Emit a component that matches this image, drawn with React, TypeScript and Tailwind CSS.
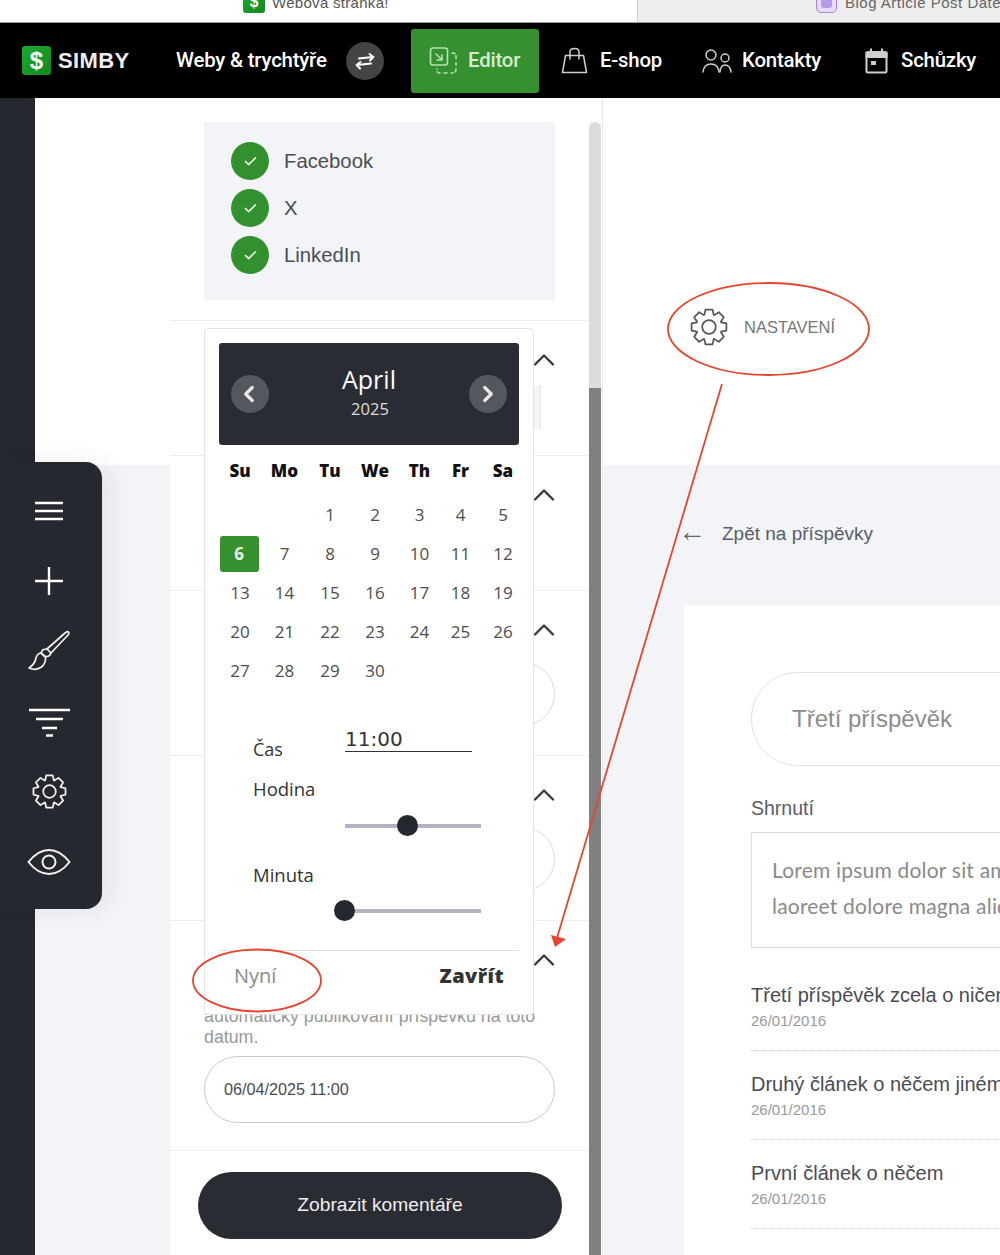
import React from "react";
import { Check, ChevronUp, ChevronLeft, ChevronRight } from "lucide-react";

function Gear({ size, stroke, sw = 1.6 }: { size: number; stroke: string; sw?: number }) {
  const pts: string[] = [];
  const teeth = 8;
  for (let i = 0; i < teeth; i++) {
    const a = (i * 2 * Math.PI) / teeth - Math.PI / 2;
    const w = 0.2;
    const list: [number, number][] = [
      [a - 0.37, 8.2],
      [a - w, 11.2],
      [a + w, 11.2],
      [a + 0.37, 8.2],
    ];
    list.forEach(([t, r]) => pts.push(`${(12 + r * Math.cos(t)).toFixed(2)},${(12 + r * Math.sin(t)).toFixed(2)}`));
  }
  return (
    <svg width={size} height={size} viewBox="0 0 24 24" fill="none" stroke={stroke} strokeWidth={sw} strokeLinejoin="round">
      <polygon points={pts.join(" ")} />
      <circle cx="12" cy="12" r="4.3" />
    </svg>
  );
}

function SLogo({ size, className }: { size: number; className?: string }) {
  return (
    <span
      style={{ width: size, height: size }}
      className={"flex shrink-0 items-center justify-center rounded-[3px] bg-gradient-to-br from-[#1fa830] to-[#0f8a22] font-['Liberation_Sans'] font-bold leading-none text-white " + (className ?? "")}
    >
      $
    </span>
  );
}

function NavText({ children, className }: { children: React.ReactNode; className?: string }) {
  return <span className={"whitespace-nowrap font-['Roboto'] text-[20.4px] font-medium tracking-[-0.2px] " + (className ?? "text-white")}>{children}</span>;
}

function Section({ height, children }: { height: string; children?: React.ReactNode }) {
  return (
    <div className={"flex flex-col border-b border-[#efefef] " + height}>
      <div className="flex h-[79px] shrink-0 justify-end pr-[27px] pt-[21px]">
        <ChevronUp size={36} strokeWidth={1.6} className="text-[#3a3c44]" />
      </div>
      {children}
    </div>
  );
}

const days: (number | null)[] = [null, null, 1, 2, 3, 4, 5, 6, 7, 8, 9, 10, 11, 12, 13, 14, 15, 16, 17, 18, 19, 20, 21, 22, 23, 24, 25, 26, 27, 28, 29, 30];

function Slider({ value }: { value: string }) {
  return (
    <div className="relative ml-[126px] h-[21px] w-[136px]">
      <div className="absolute left-0 right-0 top-[8.5px] h-[4px] bg-[#b4b3c4]" />
      <div className={"absolute top-0 h-[21px] w-[21px] rounded-full bg-[#262830] " + value} />
    </div>
  );
}

export default function App() {
  return (
    <div className="relative flex h-[1255px] w-[1000px] flex-col overflow-hidden bg-white font-['Liberation_Sans',sans-serif]">
      {/* browser tabs */}
      <div className="flex h-[22px] shrink-0 overflow-hidden">
        <div className="flex w-[637px] shrink-0 items-start pl-[243px]">
          <SLogo size={22} className="-mt-[9px] text-[16px]" />
          <span className="-mt-[8px] ml-[7px] text-[15px] tracking-[0.3px] text-[#555]">Webová stránka!</span>
        </div>
        <div className="flex flex-1 items-start border-l border-[#ccc] bg-[#eeeeee] pl-[178px]">
          <span className="-mt-[9px] h-[22px] w-[21px] shrink-0 rounded-[5px] border border-[#a884e0] bg-[#e8dcf8] p-[4px]">
            <span className="block h-full w-full rounded-[3px] bg-[#b79be8]" />
          </span>
          <span className="-mt-[8px] ml-[8px] whitespace-nowrap text-[15px] tracking-[0.5px] text-[#666]">Blog Article Post Date</span>
        </div>
      </div>

      {/* nav */}
      <div className="flex h-[76px] shrink-0 items-center border-t border-[#999] bg-black">
        <SLogo size={29} className="ml-[22px] text-[24px]" />
        <span className="ml-[7px] w-[71px] font-['Liberation_Sans'] text-[22px] font-bold tracking-[0.4px] text-[#eee]">SIMBY</span>
        <span className="ml-[47px] w-[150px]"><NavText>Weby &amp; trychtýře</NavText></span>
        <span className="ml-[20px] flex h-[38px] w-[38px] shrink-0 items-center justify-center rounded-full bg-[#444446]">
          <svg width="24" height="18" viewBox="0 0 24 18" fill="none" stroke="#fff" strokeWidth="2" strokeLinecap="round" strokeLinejoin="round">
            <path d="M6 6.5 L20 5 M16.5 2 L20.5 5 L17 8.5" />
            <path d="M18 11.5 L4 13 M7.5 10 L3.5 13 L7 16.5" />
          </svg>
        </span>
        <div className="ml-[27px] flex h-[64px] w-[128px] shrink-0 items-center rounded-[3px] bg-[#36902f] pl-[18px]">
          <svg width="30" height="30" viewBox="0 0 30 30" fill="none" stroke="#b9e0b4" strokeWidth="1.6" strokeLinecap="round">
            <rect x="1.5" y="2" width="17" height="17" rx="2.5" />
            <path d="M7 8 L13 14 M13 9 V14 H8" />
            <path d="M23 7 H24 Q27 7 27 10 V13 M27 17 V19 M27 23 Q27 27 24 27 H22 M18 27 H15 M11 27 Q8 27 8 24 V23" strokeDasharray="3 2.5" />
          </svg>
          <span className="ml-[9px]"><NavText className="text-[#d5ecd2]">Editor</NavText></span>
        </div>
        <svg className="ml-[22px] shrink-0" width="27" height="27" viewBox="0 0 27 27" fill="none" stroke="#cfcfcf" strokeWidth="1.5" strokeLinejoin="round">
          <path d="M4.5 8.5 H22.5 L25.5 25.5 H1.5 Z" />
          <path d="M9 12.5 V5 Q9 1.5 13.5 1.5 Q18 1.5 18 5 V12.5" />
        </svg>
        <span className="ml-[12px] w-[62px]"><NavText>E-shop</NavText></span>
        <svg className="ml-[40px] shrink-0" width="30" height="26" viewBox="0 0 30 26" fill="none" stroke="#cfcfcf" strokeWidth="1.5" strokeLinecap="round">
          <circle cx="9" cy="7" r="5" />
          <circle cx="23" cy="10" r="4" />
          <path d="M1 24 Q2 16 9 16 Q16 16 17 24" />
          <path d="M18 24 Q18.5 17 23 17 Q28 17 29 24" />
        </svg>
        <span className="ml-[10px] w-[80px]"><NavText>Kontakty</NavText></span>
        <svg className="ml-[43px] shrink-0" width="23" height="26" viewBox="0 0 23 26" fill="none" stroke="#cfcfcf" strokeWidth="2">
          <rect x="1.5" y="4" width="20" height="20.5" rx="1.5" />
          <path d="M1.5 5 H21.5 V9 H1.5 Z" fill="#cfcfcf" />
          <path d="M6 0.5 V4 M17 0.5 V4" />
          <rect x="6" y="13" width="5" height="4" fill="#cfcfcf" stroke="none" />
        </svg>
        <span className="ml-[13px]"><NavText>Schůzky</NavText></span>
      </div>

      {/* body */}
      <div className="flex min-h-0 flex-1">
        <div className="w-[35px] shrink-0 bg-[#262830]" />
        <div className="flex w-[135px] shrink-0 flex-col">
          <div className="h-[367px] bg-white" />
          <div className="flex-1 bg-[#f3f4f8]" />
        </div>

        {/* settings panel */}
        <div className="w-[419px] shrink-0 bg-white">
          <div className="h-[223px] border-b border-[#efefef] pl-[34px] pr-[34px] pt-[24px]">
            <div className="flex flex-col gap-[9px] bg-[#f3f4f8] pb-[26px] pl-[27px] pt-[20px]">
              {["Facebook", "X", "LinkedIn"].map((t) => (
                <div key={t} className="flex items-center">
                  <span className="flex h-[38px] w-[38px] items-center justify-center rounded-full bg-[#33902f]">
                    <Check size={15} strokeWidth={2.6} className="text-[#e8f5e6]" />
                  </span>
                  <span className="ml-[15px] text-[20.3px] text-[#4b4d55]">{t}</span>
                </div>
              ))}
            </div>
          </div>
          <Section height="h-[135px]">
            <div className="ml-auto mr-[48px] -mt-[15px] h-[44px] w-[40px] border-r border-[#e4e4e4] bg-[#f5f5f5]" />
          </Section>
          <Section height="h-[135px]" />
          <Section height="h-[165px]">
            <div className="ml-[34px] mr-[34px] -mt-[8px] h-[64px] rounded-full border border-[#dcdcdc]" />
          </Section>
          <Section height="h-[165px]">
            <div className="ml-[34px] mr-[34px] -mt-[8px] h-[64px] rounded-full border border-[#dcdcdc]" />
          </Section>
          <Section height="h-[230px]">
            <div className="ml-[34px] mr-[34px] flex flex-col">
              <p className="mt-[6px] text-[17.8px] leading-[21px] text-[#999]">
                automatický publikování příspěvku na toto datum.
              </p>
              <div className="mt-[8px] flex h-[67px] items-center rounded-full border border-[#c9c9d2] pl-[19px] text-[16.2px] text-[#4a4c54]">
                06/04/2025 11:00
              </div>
            </div>
          </Section>
          <div className="pl-[28px] pt-[21px]">
            <div className="flex h-[67px] w-[364px] items-center justify-center rounded-full bg-[#2a2c34] text-[19.2px] text-[#eee]">
              Zobrazit komentáře
            </div>
          </div>
        </div>

        {/* scrollbar */}
        <div className="flex w-[14px] shrink-0 flex-col border-r border-[#e8e8e8] bg-white pt-[24px]">
          <div className="h-[266px] w-[12px] rounded-t-full bg-[#dcdcdc]" />
          <div className="w-[12px] flex-1 bg-[#808080]" />
        </div>

        {/* page */}
        <div className="flex min-w-0 flex-1 flex-col overflow-hidden">
          <div className="flex h-[367px] shrink-0 items-start bg-white pl-[87px] pt-[210px]">
            <Gear size={38} stroke="#55575e" sw={1.1} />
            <span className="ml-[16px] mt-[7px] text-[16.5px] font-light text-[#777]">NASTAVENÍ</span>
          </div>
          <div className="flex flex-1 flex-col bg-[#f3f4f8] pl-[81px]">
            <div className="flex h-[140px] shrink-0 items-start pt-[55px]">
              <span className="-ml-[6px] -mt-[2px] w-[44px] text-[28px] leading-[28px] text-[#666]">←</span>
              <span className="text-[19px] leading-[28px] whitespace-nowrap text-[#5a5d66]">Zpět na příspěvky</span>
            </div>
            <div className="w-[500px] flex-1 bg-white pl-[67px] pt-[67px]">
              <div className="flex h-[94px] w-[500px] items-center rounded-[46px] border border-[#e2e2e2] pl-[40px] text-[24px] text-[#8c8c8c]">
                Třetí příspěvěk
              </div>
              <div className="mt-[29px] text-[19.5px] leading-[26px] text-[#5a5d66]">Shrnutí</div>
              <div className="mt-[11px] h-[116px] w-[500px] border border-[#dedede] pl-[20px] pt-[19px] font-['Lato'] text-[21px] leading-[36px] tracking-[0.2px] whitespace-nowrap text-[#8a8a8a]">
                <div>Lorem ipsum dolor sit amet, consectetuer</div>
                <div>laoreet dolore magna aliquam erat</div>
              </div>
              <div className="mt-[33px] flex w-[500px] flex-col gap-[19px]">
                {["Třetí příspěvěk zcela o ničem", "Druhý článek o něčem jiném", "První článek o něčem"].map((t) => (
                  <div key={t} className="h-[70px] border-b border-dotted border-[#cfcfcf]">
                    <div className="text-[20px] leading-[28px] whitespace-nowrap text-[#4a4c54]">{t}</div>
                    <div className="mt-[2px] text-[15px] leading-[20px] text-[#999]">26/01/2016</div>
                  </div>
                ))}
              </div>
            </div>
          </div>
        </div>
      </div>

      {/* date picker popup */}
      <div className="absolute left-[204px] top-[328px] z-10 h-[687px] w-[330px] rounded-[4px] border border-[#e3e3e6] bg-white px-[14px] pt-[14px] font-['Open_Sans'] text-[#4d4d4d]">
        <div className="flex h-[102px] w-[300px] items-center justify-between rounded-[3px] bg-[#2a2c34] px-[12px]">
          <span className="flex h-[38px] w-[38px] items-center justify-center rounded-full bg-[#55575e]">
            <ChevronLeft size={26} strokeWidth={3} className="-ml-[2px] text-[#e8e8e8]" />
          </span>
          <div className="flex flex-col items-center pb-[6px] text-white">
            <span className="text-[25px] leading-[32px]">April</span>
            <span className="ml-[2px] mt-[3px] text-[16.5px] leading-[22px] text-[#ddd]">2025</span>
          </div>
          <span className="flex h-[38px] w-[38px] items-center justify-center rounded-full bg-[#55575e]">
            <ChevronRight size={26} strokeWidth={3} className="text-[#e8e8e8]" />
          </span>
        </div>
        <div className="mt-[6px] grid grid-cols-[42px_47px_44px_46px_43px_39px_46px] text-center">
          {["Su", "Mo", "Tu", "We", "Th", "Fr", "Sa"].map((d) => (
            <div key={d} className="flex h-[39px] items-center justify-center text-[17px] font-extrabold text-[#111]">{d}</div>
          ))}
        </div>
        <div className="mt-[5px] grid grid-cols-[42px_47px_44px_46px_43px_39px_46px] text-center text-[17px]">
          {days.map((d, i) => (
            <div key={i} className="flex h-[39px] items-center justify-center">
              {d === 6 ? (
                <span className="-ml-[2px] flex h-[36px] w-[39px] items-center justify-center rounded-[3px] bg-[#36902f] font-bold text-[#e8f5e6]">6</span>
              ) : (
                d
              )}
            </div>
          ))}
        </div>
        <div className="mt-[34px] flex h-[47px] items-start pl-[34px]">
          <span className="mt-[12px] w-[92px] text-[18px] leading-[26px] text-[#333]">Čas</span>
          <div className="mt-[2px] h-[26px] w-[127px] border-b border-[#333] font-['DejaVu_Sans'] text-[20px] leading-[26px] text-[#333]">11:00</div>
        </div>
        <div className="pl-[34px] pt-[5px] text-[18.5px] leading-[26px] text-[#333]">Hodina</div>
        <div className="mt-[13px]"><Slider value="left-[52px]" /></div>
        <div className="pl-[34px] pt-[26px] text-[18.5px] leading-[26px] text-[#333]">Minuta</div>
        <div className="mt-[12px]"><Slider value="-left-[11px]" /></div>
        <div className="mt-[29px] w-[300px] border-t border-[#e0e0e2]" />
        <div className="flex w-[300px] items-center justify-between px-[15px] pt-[12px]">
          <span className="text-[20px] leading-[26px] text-[#8c8c8c]">Nyní</span>
          <span className="text-[20px] font-extrabold leading-[26px] tracking-[0.4px] text-[#333]">Zavřít</span>
        </div>
      </div>

      {/* floating toolbar */}
      <div className="absolute left-0 top-[462px] z-10 flex h-[447px] w-[102px] flex-col items-center rounded-r-[16px] bg-[#262830] pr-[4px] pt-[14px] shadow-[8px_0_22px_rgba(30,32,50,0.07)]">
        <div className="flex h-[70px] items-center">
          <svg width="28" height="20" viewBox="0 0 28 20" stroke="#fff" strokeWidth="2.6"><path d="M0 2 H28 M0 10 H28 M0 18 H28" /></svg>
        </div>
        <div className="flex h-[70px] items-center">
          <svg width="28" height="28" viewBox="0 0 28 28" stroke="#fff" strokeWidth="2.4"><path d="M0 14 H28 M14 0 V28" /></svg>
        </div>
        <div className="flex h-[70px] items-center">
          <svg width="42" height="42" viewBox="0 0 42 42" fill="none" stroke="#f2f2f2" strokeWidth="1.7" strokeLinejoin="round">
            <path d="M39.5 1.5 Q41.5 2 40.5 4.5 L23 23 L19 19 L37 3 Z" />
            <path d="M19 19 L15.5 19.5 Q13 21 13.5 23.5 L17 26.5 Q20 27 22 25 L23 23" />
            <path d="M13 23 Q9 23.5 8 28 Q7 34 1 38 Q8 41 13.5 37 Q18 33 17.5 27 Z" />
          </svg>
        </div>
        <div className="flex h-[70px] items-center">
          <svg className="mt-[3px]" width="41" height="29" viewBox="0 0 41 29" stroke="#fff" strokeWidth="2.6"><path d="M0 2 H41 M7 11 H34 M13 20 H28 M17 27.5 H24" /></svg>
        </div>
        <div className="flex h-[70px] items-center">
          <Gear size={35} stroke="#f2f2f2" sw={1.2} />
        </div>
        <div className="flex h-[70px] items-center">
          <svg className="mt-[2px]" width="44" height="28" viewBox="0 0 44 28" fill="none" stroke="#f2f2f2" strokeWidth="2">
            <path d="M1.5 14 Q11 2 22 2 Q33 2 42.5 14 Q33 26 22 26 Q11 26 1.5 14 Z" />
            <circle cx="22" cy="14" r="6.5" />
          </svg>
        </div>
      </div>

      {/* hand-drawn annotations */}
      <svg className="pointer-events-none absolute left-0 top-0 z-20" width="1000" height="1255" fill="none" stroke="#e8452e" strokeWidth="1.8">
        <ellipse cx="768.5" cy="329" rx="100.5" ry="46" />
        <ellipse cx="257" cy="980.5" rx="64" ry="31" />
        <path d="M722 384 L557 938" />
        <polygon points="551,935 566,939 555,947" fill="#e8452e" stroke="none" />
      </svg>
    </div>
  );
}
